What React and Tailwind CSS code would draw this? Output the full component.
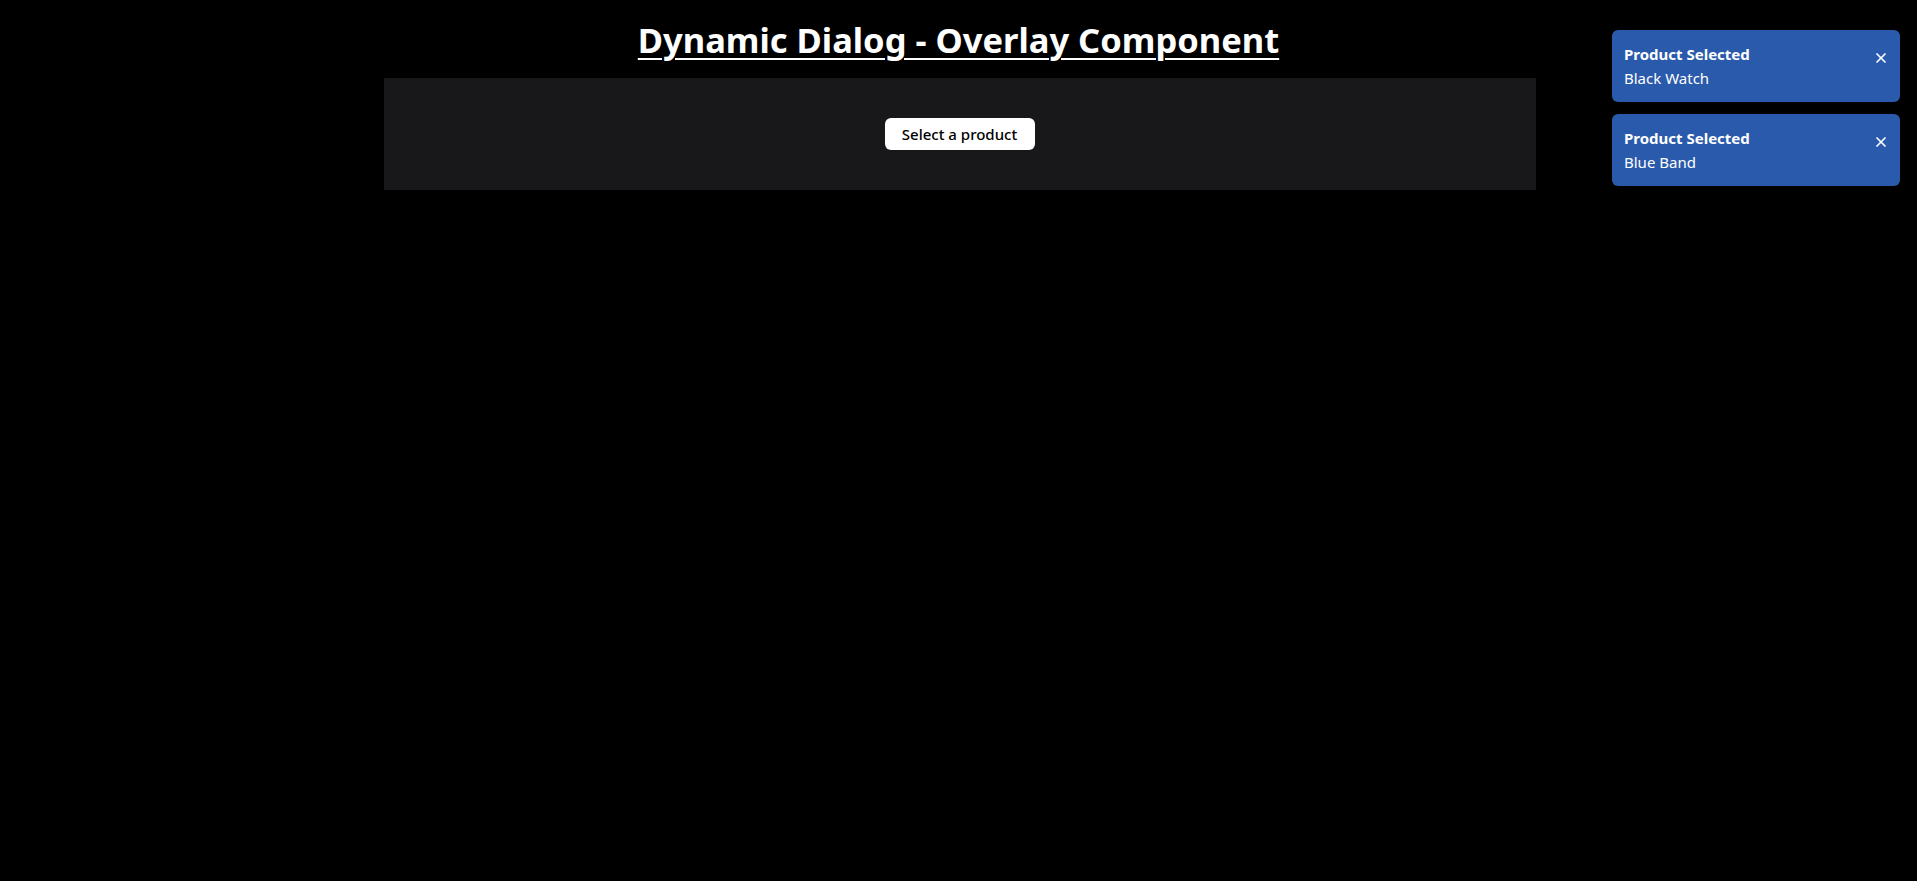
import React, { useState } from 'react';
import { X } from 'lucide-react';

const App = () => {
  const [toasts, setToasts] = useState([
    { id: 1, title: 'Product Selected', detail: 'Black Watch' },
    { id: 2, title: 'Product Selected', detail: 'Blue Band' },
  ]);

  const dismiss = (id) => setToasts(prev => prev.filter(t => t.id !== id));

  return (
    <div className="min-h-screen bg-black text-white font-['Noto_Sans',sans-serif]">
      <h1 className="pt-[18px] text-center text-[34.5px] font-bold leading-[44px] underline decoration-2 underline-offset-[5px]">
        Dynamic Dialog - Overlay Component
      </h1>

      {/* Dialog trigger panel */}
      <div className="mx-auto mt-[16px] flex h-[112px] w-[1152px] translate-x-[1px] items-center justify-center bg-zinc-900">
        <button className="h-[32px] w-[150px] rounded-md bg-white text-[15px] font-medium text-black">
          Select a product
        </button>
      </div>

      {/* Toasts */}
      <div className="fixed right-[17px] top-[30px] flex w-[288px] flex-col gap-3">
        {toasts.map(t => (
          <div key={t.id} className="flex items-start justify-between rounded-md bg-[#2a5aab] px-3 py-3">
            <div className="text-[15px] leading-6">
              <p className="font-bold">{t.title}</p>
              <p>{t.detail}</p>
            </div>
            <button onClick={() => dismiss(t.id)} className="mt-[8px] -mr-[1px] text-white">
              <X size={16} strokeWidth={2.6} />
            </button>
          </div>
        ))}
      </div>
    </div>
  );
};

export default App;
